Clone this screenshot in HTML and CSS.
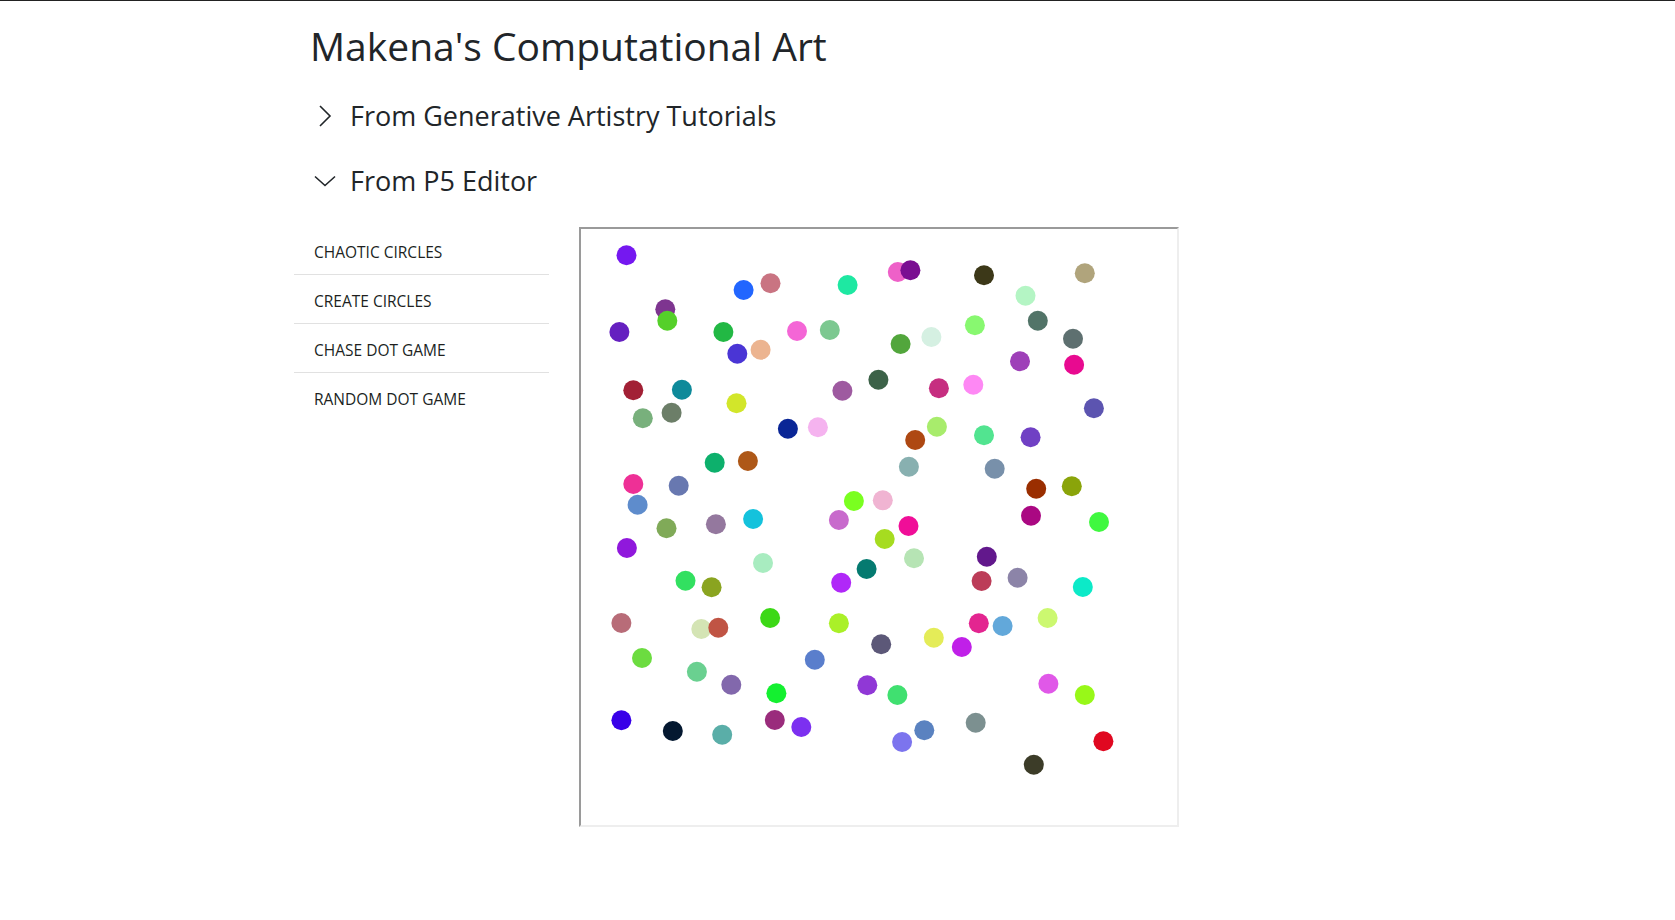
FILE: index.html
```html
<!DOCTYPE html>
<html lang="en">
<head>
<meta charset="utf-8">
<title>Makena's Computational Art</title>
<link rel="stylesheet" href="styles.css">
</head>
<body>
<div class="topline"></div>
<main class="page">
  <h1 class="title">Makena's Computational Art</h1>
  <section class="accordion">
    <div class="acc-head">
      <svg class="chev chev-right" width="14" height="22" viewBox="0 0 14 22"><path d="M2 1 L12 11 L2 21" fill="none" stroke="#212529" stroke-width="1.6"/></svg>
      <h3 class="acc-title">From Generative Artistry Tutorials</h3>
    </div>
    <div class="acc-head">
      <svg class="chev chev-down" width="22" height="12" viewBox="0 0 22 12"><path d="M1 1.5 L11 10.5 L21 1.5" fill="none" stroke="#212529" stroke-width="1.6"/></svg>
      <h3 class="acc-title">From P5 Editor</h3>
    </div>
    <div class="acc-body">
      <nav class="menu">
        <a class="menu-item">CHAOTIC CIRCLES</a>
        <a class="menu-item">CREATE CIRCLES</a>
        <a class="menu-item">CHASE DOT GAME</a>
        <a class="menu-item">RANDOM DOT GAME</a>
      </nav>
      <div class="frame">
        <svg class="canvas" width="596" height="596" viewBox="0 0 596 596">
          <circle cx="45.5" cy="26.3" r="10" fill="#7518f0"/>
          <circle cx="162.6" cy="61" r="10" fill="#2266ff"/>
          <circle cx="189.5" cy="54.3" r="10" fill="#c97482"/>
          <circle cx="266.6" cy="56" r="10" fill="#1ee8a2"/>
          <circle cx="316.8" cy="43" r="10" fill="#ee60c8"/>
          <circle cx="329.4" cy="41.3" r="10" fill="#7a0e92"/>
          <circle cx="403" cy="46.3" r="10" fill="#3c3818"/>
          <circle cx="503.8" cy="44.3" r="10" fill="#b0a47c"/>
          <circle cx="444.5" cy="66.7" r="10" fill="#b4f5c4"/>
          <circle cx="84.3" cy="80.3" r="10" fill="#7e3590"/>
          <circle cx="86.3" cy="91.7" r="10" fill="#55d02a"/>
          <circle cx="38.4" cy="103" r="10" fill="#6520c0"/>
          <circle cx="142.4" cy="103" r="10" fill="#22b844"/>
          <circle cx="156.3" cy="124.7" r="10" fill="#4a35d5"/>
          <circle cx="179.6" cy="120.7" r="10" fill="#ecb490"/>
          <circle cx="216" cy="102" r="10" fill="#f466d6"/>
          <circle cx="248.8" cy="101" r="10" fill="#7cc890"/>
          <circle cx="319.6" cy="115" r="10" fill="#52a63c"/>
          <circle cx="350.4" cy="108" r="10" fill="#d5f0e2"/>
          <circle cx="393.9" cy="96.3" r="10" fill="#88f870"/>
          <circle cx="456.8" cy="91.7" r="10" fill="#527468"/>
          <circle cx="492" cy="109.7" r="10" fill="#5e7070"/>
          <circle cx="439" cy="132.3" r="10" fill="#9e40b8"/>
          <circle cx="493.1" cy="135.7" r="10" fill="#e80a90"/>
          <circle cx="52.3" cy="161.3" r="10" fill="#a22035"/>
          <circle cx="100.9" cy="160.7" r="10" fill="#0e8a9a"/>
          <circle cx="61.8" cy="189.3" r="10" fill="#78b07c"/>
          <circle cx="90.6" cy="183.7" r="10" fill="#6c7e68"/>
          <circle cx="155.5" cy="174.3" r="10" fill="#d2e62a"/>
          <circle cx="206.9" cy="199.7" r="10" fill="#0a2696"/>
          <circle cx="236.9" cy="198.3" r="10" fill="#f5b3ef"/>
          <circle cx="261.4" cy="161.7" r="10" fill="#9e5aa0"/>
          <circle cx="297.4" cy="150.7" r="10" fill="#3c6248"/>
          <circle cx="357.9" cy="159.3" r="10" fill="#c62e80"/>
          <circle cx="392.3" cy="155.7" r="10" fill="#fe88f4"/>
          <circle cx="512.9" cy="179.3" r="10" fill="#5c54b0"/>
          <circle cx="334.2" cy="211" r="10" fill="#ae4812"/>
          <circle cx="355.9" cy="197.7" r="10" fill="#a8ec6c"/>
          <circle cx="403" cy="206.3" r="10" fill="#52e490"/>
          <circle cx="449.6" cy="208.3" r="10" fill="#7040c4"/>
          <circle cx="133.7" cy="233.7" r="10" fill="#0db06c"/>
          <circle cx="166.9" cy="232" r="10" fill="#ae5818"/>
          <circle cx="327.9" cy="237.7" r="10" fill="#88b0b0"/>
          <circle cx="413.7" cy="239.7" r="10" fill="#7890aa"/>
          <circle cx="52.3" cy="255" r="10" fill="#ee3096"/>
          <circle cx="97.7" cy="256.7" r="10" fill="#6878b0"/>
          <circle cx="56.6" cy="275.7" r="10" fill="#5e8ccc"/>
          <circle cx="455.2" cy="259.7" r="10" fill="#9a2e00"/>
          <circle cx="490.8" cy="257.3" r="10" fill="#8aa40a"/>
          <circle cx="272.9" cy="272" r="10" fill="#7aff20"/>
          <circle cx="301.8" cy="271.3" r="10" fill="#f0b4d2"/>
          <circle cx="85.5" cy="299.3" r="10" fill="#80aa58"/>
          <circle cx="134.9" cy="295.3" r="10" fill="#94789e"/>
          <circle cx="172.1" cy="290" r="10" fill="#14c2dc"/>
          <circle cx="257.9" cy="291" r="10" fill="#c86acc"/>
          <circle cx="327.5" cy="297" r="10" fill="#f00e98"/>
          <circle cx="450" cy="286.7" r="10" fill="#aa0882"/>
          <circle cx="518" cy="293" r="10" fill="#40f840"/>
          <circle cx="45.9" cy="319" r="10" fill="#9018dc"/>
          <circle cx="182" cy="334" r="10" fill="#a8ecc0"/>
          <circle cx="303.7" cy="310" r="10" fill="#a6dc20"/>
          <circle cx="285.6" cy="340" r="10" fill="#057a70"/>
          <circle cx="333" cy="329.3" r="10" fill="#b6e4b4"/>
          <circle cx="405.8" cy="327.7" r="10" fill="#62188c"/>
          <circle cx="104.5" cy="351.7" r="10" fill="#32e060"/>
          <circle cx="130.6" cy="358.3" r="10" fill="#8aa420"/>
          <circle cx="260.2" cy="353.7" r="10" fill="#b028f8"/>
          <circle cx="400.6" cy="352" r="10" fill="#bc3c58"/>
          <circle cx="436.6" cy="348.7" r="10" fill="#8c84a8"/>
          <circle cx="501.8" cy="358" r="10" fill="#0ceac8"/>
          <circle cx="40.4" cy="394" r="10" fill="#b86c78"/>
          <circle cx="120.3" cy="400" r="10" fill="#d4e4b4"/>
          <circle cx="137.3" cy="398.7" r="10" fill="#c05444"/>
          <circle cx="189.1" cy="389" r="10" fill="#3cd816"/>
          <circle cx="257.9" cy="394.3" r="10" fill="#aaf028"/>
          <circle cx="397.8" cy="394.3" r="10" fill="#e32590"/>
          <circle cx="421.6" cy="397" r="10" fill="#62a8da"/>
          <circle cx="466.6" cy="389" r="10" fill="#ccf870"/>
          <circle cx="352.8" cy="408.7" r="10" fill="#e4ec58"/>
          <circle cx="380.8" cy="418" r="10" fill="#c020e8"/>
          <circle cx="300.2" cy="415.3" r="10" fill="#5c5878"/>
          <circle cx="61" cy="429" r="10" fill="#6cdc40"/>
          <circle cx="115.9" cy="442.7" r="10" fill="#6ad090"/>
          <circle cx="150.3" cy="455.7" r="10" fill="#8268ac"/>
          <circle cx="233.8" cy="430.7" r="10" fill="#5a7ecc"/>
          <circle cx="195.4" cy="464.3" r="10" fill="#14f030"/>
          <circle cx="286.3" cy="456.3" r="10" fill="#9038d6"/>
          <circle cx="316.4" cy="466" r="10" fill="#40e070"/>
          <circle cx="467.4" cy="454.7" r="10" fill="#e058e8"/>
          <circle cx="503.8" cy="466" r="10" fill="#98f818"/>
          <circle cx="40.4" cy="491.3" r="10" fill="#3800e8"/>
          <circle cx="91.8" cy="502" r="10" fill="#041830"/>
          <circle cx="141.2" cy="505.7" r="10" fill="#5aaea8"/>
          <circle cx="193.8" cy="491" r="10" fill="#9a2c7c"/>
          <circle cx="220.3" cy="498" r="10" fill="#7c30f0"/>
          <circle cx="321.1" cy="513" r="10" fill="#7c74ee"/>
          <circle cx="343.3" cy="501.3" r="10" fill="#5a82c0"/>
          <circle cx="394.7" cy="493.7" r="10" fill="#7c9090"/>
          <circle cx="522.4" cy="512.3" r="10" fill="#e00820"/>
          <circle cx="452.8" cy="535.7" r="10" fill="#3c3c28"/>
        </svg>
      </div>
    </div>
  </section>
</main>
</body>
</html>
```

FILE: styles.css
```css
html, body {
  margin: 0;
  padding: 0;
  background: #ffffff;
}

body {
  font-family: "Open Sans", "Noto Sans", "Liberation Sans", sans-serif;
  color: #212529;
}

.topline {
  height: 1px;
  background: #222222;
}

.page {
  padding-left: 294px;
  padding-top: 0;
}

.title {
  margin: 0;
  padding: 21px 0 0 16px;
  font-size: 39px;
  font-weight: 400;
  line-height: 48px;
}

.accordion {
  margin-top: 26px;
}

.acc-head {
  display: flex;
  align-items: center;
  height: 40px;
  margin-bottom: 25px;
}

.chev {
  display: block;
  flex: none;
}

.chev-right {
  margin-left: 24px;
  margin-right: 18px;
}

.chev-down {
  margin-left: 20px;
  margin-right: 14px;
}

.acc-title {
  margin: 0;
  font-size: 27px;
  font-weight: 400;
  line-height: 40px;
}

.acc-body {
  display: flex;
  align-items: flex-start;
  gap: 30px;
  margin-top: 3px;
}

.menu {
  width: 255px;
  display: flex;
  flex-direction: column;
}

.menu-item {
  box-sizing: border-box;
  display: flex;
  align-items: center;
  height: 49px;
  padding: 3px 0 0 20px;
  border-bottom: 1px solid #e1e1e1;
  font-size: 15.5px;
  color: #201f1e;
  text-decoration: none;
}

.menu-item:last-child {
  border-bottom: none;
}

.frame {
  width: 596px;
  height: 596px;
  margin-top: 1px;
  border-style: solid;
  border-width: 2px;
  border-color: #9a9a9a #eeeeee #eeeeee #9a9a9a;
  background: #ffffff;
}

.canvas {
  display: block;
}
```
